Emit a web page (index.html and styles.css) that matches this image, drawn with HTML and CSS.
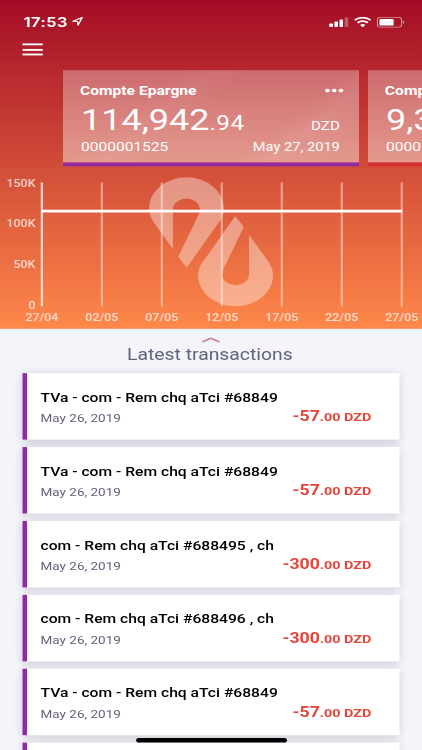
FILE: index.html
```html
<!DOCTYPE html>
<html lang="fr">
<head>
  <meta charset="UTF-8" />
  <meta name="viewport" content="width=device-width, initial-scale=1.0" />
  <title>Compte Epargne</title>
  <link rel="stylesheet" href="styles.css">
</head>
<body>
  <div class="screen">
    <header class="hero">
      <div class="status-bar">
        <span class="time">17:53</span>
        <svg class="location" viewBox="0 0 10 10"><path d="M.8 5 9.1.9 5.3 9.3 4.9 5.2Z" /></svg>
        <svg class="status-icons" viewBox="0 0 68 12">
          <rect x=".6" y="7.5" width="3.3" height="3.7" rx=".7" />
          <rect x="5.2" y="5.2" width="3.1" height="6" rx=".7" />
          <rect x="9.7" y="3" width="3.1" height="8.2" rx=".7" />
          <rect class="faint" x="14.3" y=".8" width="3.1" height="10.4" rx=".7" />
          <g class="wifi">
            <path d="M23.3 3.8a10.4 10.4 0 0 1 14 0" />
            <path d="M25.8 6.6a6.7 6.7 0 0 1 9 0" />
            <path class="dot" d="M27.9 9a3.8 3.8 0 0 1 4.8 0l-2.4 2.5Z" />
          </g>
          <rect class="battery" x="43.4" y=".7" width="21.4" height="10.8" rx="3" />
          <rect x="45.2" y="2.5" width="12.6" height="7.2" rx="1.3" />
          <path class="cap" d="M66 4.300v3.600q1.300-.5 1.300-1.800t-1.300-1.800Z" />
        </svg>
      </div>
      <div class="menu">
        <span></span>
        <span></span>
        <span></span>
      </div>

      <div class="accounts">
        <div class="account">
          <div class="row name-row">
            <span class="name">Compte Epargne</span>
            <span class="dots"><i></i><i></i><i></i></span>
          </div>
          <div class="row balance-row">
            <span class="balance">114,942<small>.94</small></span>
            <span class="currency">DZD</span>
          </div>
          <div class="row number-row">
            <span class="number">0000001525</span>
            <span class="date">May 27, 2019</span>
          </div>
        </div>
        <div class="account red">
          <div class="row name-row">
            <span class="name">Comp</span>
          </div>
          <div class="row balance-row">
            <span class="balance">9,3</span>
          </div>
          <div class="row number-row">
            <span class="number">0000</span>
          </div>
        </div>
      </div>

      <svg class="chart" viewBox="0 0 375 176">
        <defs>
          <path id="drop" d="M153.7 89.6 136.6 60.5C133.6 55 132.4 50.5 132.4 45.5A33.3 33.5 0 0 1 199 45.5C199 54 195.5 59.5 191.5 65.8L165.9 109.8 158.4 98 175.8 54C177 51 177.6 48.5 177.6 46A12 12.2 0 0 0 153.7 46Z" />
        </defs>
        <g class="logo">
          <use href="#drop" />
          <use href="#drop" transform="rotate(180 187.5 81.85)" />
        </g>
        <path class="axis" d="M37.2 17.5V151.5" />
        <path class="grid" d="M90.5 17.5V151.5M143.8 17.5V151.5M197.1 17.5V151.5M250.4 17.5V151.5M303.7 17.5V151.5M357 17.5V151.5" />
        <path class="line" d="M37.2 48.5H357.5" />
        <g class="y-labels">
          <text x="31.5" y="22.5">150K</text>
          <text x="31.5" y="66.2">100K</text>
          <text x="31.5" y="110.5">50K</text>
          <text x="31.5" y="154.3">0</text>
        </g>
        <g class="x-labels">
          <text x="37.2" y="168">27/04</text>
          <text x="90.5" y="168">02/05</text>
          <text x="143.8" y="168">07/05</text>
          <text x="197.1" y="168">12/05</text>
          <text x="250.4" y="168">17/05</text>
          <text x="303.7" y="168">22/05</text>
          <text x="357" y="168">27/05</text>
        </g>
      </svg>
    </header>

    <main class="transactions">
      <svg class="chevron" viewBox="0 0 17 6"><path d="M.8 5.2 8.3 1.2 16 5.2" /></svg>
      <h2>Latest transactions</h2>
      <div class="list">
        <div class="item">
          <div class="label">TVa - com - Rem chq aTci #68849</div>
          <div class="item-row"><span class="when">May 26, 2019</span><span class="amount">-57<small>.00 DZD</small></span></div>
        </div>
        <div class="item">
          <div class="label">TVa - com - Rem chq aTci #68849</div>
          <div class="item-row"><span class="when">May 26, 2019</span><span class="amount">-57<small>.00 DZD</small></span></div>
        </div>
        <div class="item">
          <div class="label">com - Rem chq aTci #688495 , ch</div>
          <div class="item-row"><span class="when">May 26, 2019</span><span class="amount">-300<small>.00 DZD</small></span></div>
        </div>
        <div class="item">
          <div class="label">com - Rem chq aTci #688496 , ch</div>
          <div class="item-row"><span class="when">May 26, 2019</span><span class="amount">-300<small>.00 DZD</small></span></div>
        </div>
        <div class="item">
          <div class="label">TVa - com - Rem chq aTci #68849</div>
          <div class="item-row"><span class="when">May 26, 2019</span><span class="amount">-57<small>.00 DZD</small></span></div>
        </div>
        <div class="item last"></div>
      </div>
    </main>
    <div class="home-indicator"></div>
  </div>
</body>
</html>
```
FILE: styles.css
```css
:root {
  --purple: #9128a5;
  --red: #d32f2f;
  --amount: #e5443a;
  --bg: #f4f5fb;
  --muted: #62627c;
}
* {
  box-sizing: border-box;
  margin: 0;
  padding: 0;
}
body {
  width: 422px;
  height: 750px;
  overflow: hidden;
  background: var(--bg);
  font-family: Roboto, "Liberation Sans", sans-serif;
}
/* 375x812 phone layout stretched to the window */
.screen {
  position: relative;
  width: 375px;
  height: 812px;
  margin-bottom: -62px;
  overflow: hidden;
  transform: scale(1.12533, 0.92365);
  transform-origin: 0 0;
}
.hero {
  height: 356px;
  overflow: hidden;
  background: linear-gradient(180deg, #a30c26 0%, #d04c38 50%, #ff884a 100%);
  color: #fff;
}
.status-bar {
  display: flex;
  align-items: center;
  height: 46px;
  padding: 0 15px 0 21px;
}
.time {
  font-family: Inter, Roboto, sans-serif;
  font-size: 14.5px;
  font-weight: 600;
  letter-spacing: 0.5px;
}
.location {
  width: 10px;
  height: 10px;
  margin-left: 3.5px;
  fill: none;
  stroke: #fff;
  stroke-width: 1.2;
  stroke-linejoin: round;
}
.status-icons {
  width: 68px;
  height: 12px;
  margin-top: 1px;
  margin-left: auto;
  fill: #fff;
}
.faint {
  opacity: 0.3;
}
.wifi path {
  fill: none;
  stroke: #fff;
  stroke-width: 2;
}
.wifi .dot {
  fill: #fff;
  stroke: none;
}
.battery {
  fill: none;
  stroke: #fff;
  stroke-opacity: 0.5;
}
.cap {
  opacity: 0.5;
}
.menu {
  display: flex;
  flex-direction: column;
  gap: 3.3px;
  width: 18px;
  height: 30px;
  margin-left: 19.5px;
  padding-top: 1.2px;
}
.menu span {
  height: 2.1px;
  background: #fff;
}
.accounts {
  display: flex;
  gap: 8px;
  height: 104px;
  padding-left: 56px;
}
.account {
  flex: 0 0 263px;
  height: 104px;
  padding: 0 17px 0 15px;
  border-bottom: 4px solid var(--purple);
  background:
    linear-gradient(135deg, rgba(255,255,255,0) 28%, rgba(255,255,255,0.04) 37%, rgba(255,255,255,0) 46%, rgba(255,255,255,0) 70%, rgba(255,255,255,0.06) 78%, rgba(255,255,255,0) 92%),
    linear-gradient(180deg, rgba(255,255,255,0.31), rgba(255,255,255,0.43));
  background-clip: padding-box;
}
.account.red {
  flex: 0 0 48px;
  padding-right: 0;
  border-bottom-color: var(--red);
  background: linear-gradient(180deg, rgba(255,255,255,0.31), rgba(255,255,255,0.43));
  background-clip: padding-box;
  overflow: hidden;
}
.row {
  display: flex;
  justify-content: space-between;
  align-items: baseline;
  white-space: nowrap;
}
.name-row {
  height: 35px;
  padding-top: 14px;
}
.name {
  font-size: 13.9px;
  font-weight: 700;
}
.dots {
  display: flex;
  gap: 2px;
  align-self: center;
  margin-top: -5px;
  margin-right: -3px;
}
.dots i {
  width: 4px;
  height: 4.9px;
  border-radius: 50%;
  background: #fff;
}
.balance-row {
  height: 37px;
  line-height: 39px;
}
.balance {
  margin-left: 1px;
  font-size: 32px;
}
.balance small {
  font-size: 21.5px;
  letter-spacing: 0.4px;
}
.currency {
  font-size: 13.5px;
}
.number-row {
  height: 20px;
  line-height: 21px;
}
.number {
  margin-left: 1px;
  font-size: 13.8px;
}
.date {
  position: relative;
  top: 1px;
  font-size: 13px;
}
.chart {
  display: block;
  width: 375px;
  height: 176px;
}
.logo {
  fill: #fff;
  opacity: 0.38;
}
.axis, .grid, .line {
  fill: none;
  stroke: #fff;
  stroke-width: 2;
}
.axis {
  stroke-opacity: 0.75;
}
.grid {
  stroke-opacity: 0.42;
}
.line {
  stroke-width: 3;
}
.chart text {
  font-size: 11px;
  font-weight: 500;
  fill: #fff;
  fill-opacity: 0.72;
}
.y-labels {
  text-anchor: end;
}
.x-labels {
  text-anchor: middle;
}
.transactions {
  display: flex;
  flex-direction: column;
  align-items: center;
  padding-top: 9px;
}
.chevron {
  width: 17px;
  height: 6px;
  fill: none;
  stroke: #cf8094;
  stroke-width: 1.7;
}
h2 {
  height: 33px;
  margin-right: 2px;
  font-size: 17.2px;
  font-weight: 400;
  line-height: 26.5px;
  color: var(--muted);
}
.list {
  display: flex;
  flex-direction: column;
  gap: 8px;
  width: 335px;
}
.item {
  height: 72px;
  padding: 16px 25px 0 12px;
  border-left: 4px solid var(--purple);
  background: #fff;
  box-shadow: 0 2px 9px rgba(30,20,60,0.2);
}
.item.last {
  height: 8px;
  padding: 0;
}
.label {
  height: 20px;
  font-size: 13.92px;
  font-weight: 500;
  line-height: 20px;
  color: #000;
  white-space: nowrap;
}
.item-row {
  display: flex;
  justify-content: space-between;
  line-height: 23px;
}
.when {
  padding-top: 1.5px;
  font-size: 12px;
  color: var(--muted);
}
.amount {
  font-size: 15.7px;
  font-weight: 700;
  line-height: 22px;
  color: var(--amount);
}
.amount small {
  font-size: 12.8px;
}
.home-indicator {
  position: absolute;
  left: 121px;
  bottom: 8px;
  width: 134px;
  height: 5px;
  border-radius: 3px;
  background: #000;
}
```
